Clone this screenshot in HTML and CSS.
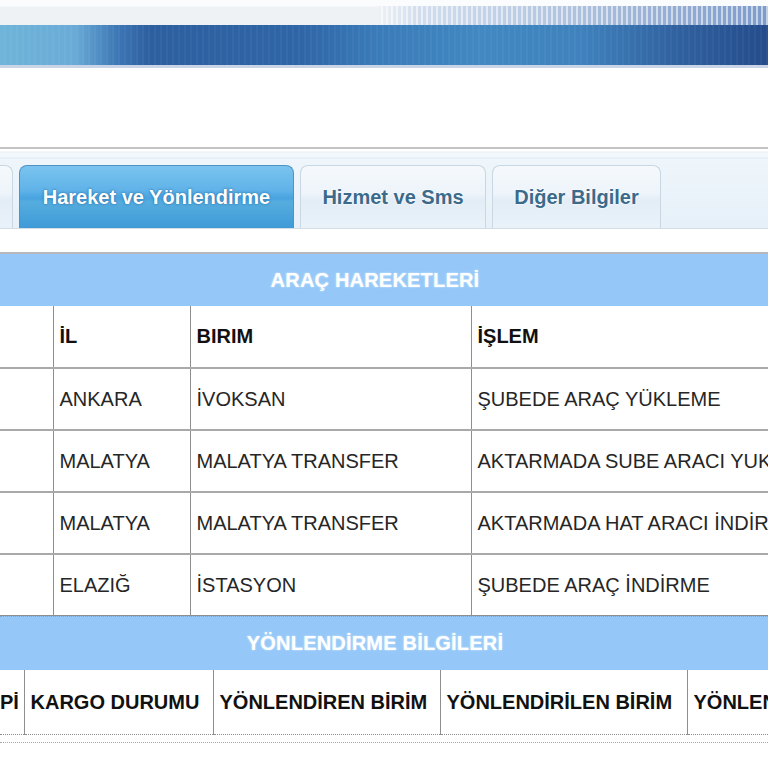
FILE: index.html
```html
<!DOCTYPE html>
<html lang="tr">
<head>
<meta charset="utf-8">
<title>Kargo Takip</title>
<link rel="stylesheet" href="styles.css">
</head>
<body>
<div class="banner">
  <div class="banner-top"><div class="banner-pattern"></div></div>
  <div class="banner-bar"></div>
  <div class="banner-bottom"></div>
</div>
<div class="blank"></div>
<div class="tabstrip">
  <div class="tabs">
    <div class="tab tab-partial"></div>
    <div class="tab tab-active">Hareket ve Yönlendirme</div>
    <div class="tab tab-2">Hizmet ve Sms</div>
    <div class="tab tab-3">Diğer Bilgiler</div>
  </div>
</div>
<div class="gap"></div>
<div class="section-title">ARAÇ HAREKETLERİ</div>
<table class="grid grid-moves">
  <colgroup><col class="m1"><col class="m2"><col class="m3"><col></colgroup>
  <tr class="head"><th></th><th>İL</th><th>BIRIM</th><th>İŞLEM</th></tr>
  <tr><td></td><td>ANKARA</td><td>İVOKSAN</td><td>ŞUBEDE ARAÇ YÜKLEME</td></tr>
  <tr><td></td><td>MALATYA</td><td>MALATYA TRANSFER</td><td>AKTARMADA SUBE ARACI YUKLEME</td></tr>
  <tr><td></td><td>MALATYA</td><td>MALATYA TRANSFER</td><td>AKTARMADA HAT ARACI İNDİRME</td></tr>
  <tr><td></td><td>ELAZIĞ</td><td>İSTASYON</td><td>ŞUBEDE ARAÇ İNDİRME</td></tr>
</table>
<div class="section-title section-title-2">YÖNLENDİRME BİLGİLERİ</div>
<table class="grid grid-routes">
  <colgroup><col class="r1"><col class="r2"><col class="r3"><col class="r4"><col></colgroup>
  <tr class="head"><th class="cut">Pİ</th><th>KARGO DURUMU</th><th>YÖNLENDİREN BİRİM</th><th>YÖNLENDİRİLEN BİRİM</th><th>YÖNLENDİRME TARİHİ</th></tr>
</table>
<div class="footer-lines"></div>
</body>
</html>
```

FILE: styles.css
```css
html, body {
  margin: 0;
  padding: 0;
  overflow: hidden;
  background: #ffffff;
  font-family: "Liberation Sans", Arial, sans-serif;
}

.banner-top {
  height: 25px;
  background: linear-gradient(#fbfcfd 0, #fbfcfd 6px, #eef2f5 7px, #eef2f5 100%);
  display: flex;
  justify-content: flex-end;
}
.banner-pattern {
  width: 390px;
  margin-top: 6px;
  background:
    repeating-linear-gradient(90deg, rgba(255,255,255,0) 0 3px, rgba(255,255,255,0.55) 3px 5px),
    linear-gradient(90deg, rgba(238,242,245,1) 0, rgba(210,222,238,1) 40px, #b7c9e2 160px, #93acd2 300px, #7d9ccb 390px);
}
.banner-bar {
  height: 40px;
  background:
    repeating-linear-gradient(90deg, rgba(255,255,255,0) 0 4px, rgba(255,255,255,0.04) 4px 6px),
    linear-gradient(90deg, #6fb4d9 0, #69abd6 75px, #3d76b5 118px, #2d5f9f 150px, #2f65a6 300px, #3a7cb9 380px, #4288c1 480px, #3f82bd 580px, #30609f 680px, #244c8c 768px);
}
.banner-bottom {
  height: 3px;
  background: #c9d5e7;
}

.blank {
  height: 79px;
}

.tabstrip {
  border-top: 2px solid #c3c3c3;
  height: 82px;
  background: linear-gradient(#ffffff 0, #ffffff 2px, #e6eef4 3px, #f2f8fc 4px, #f2f8fc 8px, #dfeaf2 9px, #eef6fb 10px, #e6f0f8 100%);
  border-bottom: 1px solid #d2dde6;
  display: flex;
  align-items: flex-end;
  box-sizing: border-box;
}
.tabs {
  display: flex;
  gap: 6px;
  height: 63px;
}
.tab {
  box-sizing: border-box;
  height: 63px;
  border: 1px solid #c9d7e2;
  border-bottom: none;
  border-radius: 8px 8px 0 0;
  background: linear-gradient(#f5f9fc 0, #edf4fa 45%, #e3edf6 55%, #e9f2f9 100%);
  color: #3b6a8a;
  font-weight: bold;
  font-size: 20px;
  display: flex;
  align-items: center;
  justify-content: center;
  text-shadow: 0 0 2px #ffffff, 0 0 2px #ffffff;
}
.tab-partial {
  width: 13px;
  border-left: none;
  border-radius: 0 8px 0 0;
}
.tab-active {
  width: 275px;
  border-color: #4f93c4;
  background: linear-gradient(#7ac4ef 0, #5fb2e8 40%, #48a3df 52%, #55acde 58%, #3f9ad7 100%);
  color: #ffffff;
  text-shadow: 0 0 3px #2b78b0, 0 0 1px #2b78b0;
}
.tab-2 {
  width: 186px;
}
.tab-3 {
  width: 169px;
}

.gap {
  height: 23px;
  border-bottom: 2px solid #b5b9bd;
}

.section-title {
  height: 52px;
  background: #95c8f8;
  color: #ffffff;
  font-weight: bold;
  font-size: 20px;
  display: flex;
  align-items: center;
  justify-content: center;
  padding-right: 18px;
  text-shadow: 0 0 2px #d8ecff;
  letter-spacing: 0.2px;
}
.section-title-2 {
  border-top: 1px dotted #8aa6c2;
  height: 53px;
}

.grid {
  border-collapse: collapse;
  table-layout: fixed;
  width: 100%;
}
.grid th, .grid td {
  border: 1px solid #8e8e8e;
  border-top: 2px solid #a9a9a9;
  height: 60px;
  padding: 0 0 0 6px;
  text-align: left;
  white-space: nowrap;
  overflow: hidden;
  font-size: 20px;
  color: #262626;
  font-weight: normal;
}
.grid tr > :first-child {
  border-left: none;
}
.grid tr > :last-child {
  border-right: none;
}
.grid .head th {
  font-weight: bold;
  color: #111111;
  border-top: none;
  height: 61px;
}
.grid-moves col.m1 { width: 53px; }
.grid-moves col.m2 { width: 137px; }
.grid-moves col.m3 { width: 281px; }

.grid-routes col.r1 { width: 24px; }
.grid-routes col.r2 { width: 189px; }
.grid-routes col.r3 { width: 227px; }
.grid-routes col.r4 { width: 247px; }
.grid-routes .head th {
  height: 64px;
  border-bottom: 1px dotted #8c8c8c;
}
.grid-routes th.cut {
  padding-left: 0;
}

.footer-lines {
  height: 7px;
  border-bottom: 1px dotted #a8a8a8;
}
```
